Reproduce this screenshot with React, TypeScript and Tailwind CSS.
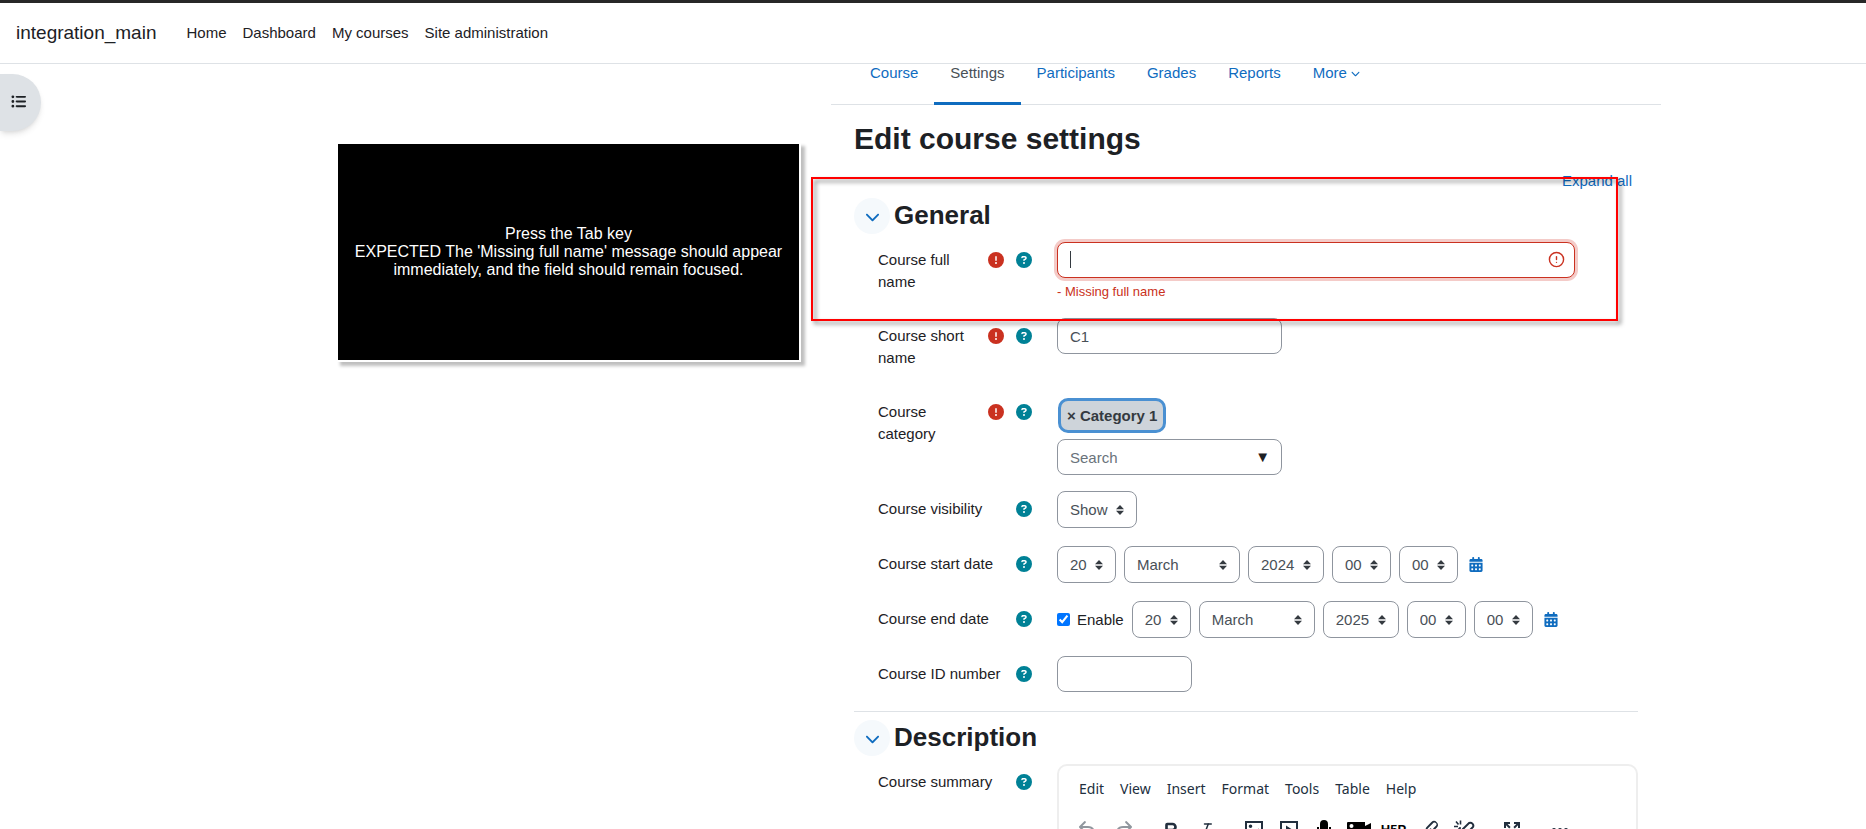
import type { ReactNode } from 'react';
import { Bold, CircleAlert, Italic } from 'lucide-react';
import {
  FaCalendarDays,
  FaChevronDown,
  FaCircleExclamation,
  FaCircleQuestion,
  FaListUl,
} from 'react-icons/fa6';

const navLinks = ['Home', 'Dashboard', 'My courses', 'Site administration'];
const tabs = ['Course', 'Settings', 'Participants', 'Grades', 'Reports'];
const editorMenus = ['Edit', 'View', 'Insert', 'Format', 'Tools', 'Table', 'Help'];

const inputClass =
  'h-9 max-w-full rounded-lg border border-[#8f959e] bg-white px-3 text-[15px] text-[#495057] outline-none placeholder:text-[#6a737b]';

interface FieldRowProps {
  label: string;
  htmlFor?: string;
  required?: boolean;
  children: ReactNode;
}

function FieldRow({ label, htmlFor, required, children }: FieldRowProps) {
  return (
    <div className="mb-4 ml-6 grid min-h-[39px] grid-cols-[154px_minmax(0,1fr)] gap-[25px]">
      <div className="flex items-start justify-between gap-2 pt-[7px] pb-[9px]">
        <label htmlFor={htmlFor}>{label}</label>
        <div className="flex h-[22px] shrink-0 items-center gap-3">
          {required && <FaCircleExclamation className="size-4 text-[#ca3120]" />}
          <button type="button" aria-label={`Help with ${label}`}>
            <FaCircleQuestion className="size-4 text-[#008196]" />
          </button>
        </div>
      </div>
      <div className="min-w-0">{children}</div>
    </div>
  );
}

interface SelectProps {
  id?: string;
  label?: string;
  value: string;
  width: string;
}

function Select({ id, label, value, width }: SelectProps) {
  return (
    <div className={`relative ${width}`}>
      <select
        id={id}
        aria-label={label}
        defaultValue={value}
        className="h-[37px] w-full appearance-none rounded-lg border border-[#8f959e] bg-white pl-3 text-[15px] text-[#495057]"
      >
        <option>{value}</option>
      </select>
      <svg
        viewBox="0 0 8 10"
        className="pointer-events-none absolute top-[14px] right-[13px] h-[10px] w-2 fill-[#343a40]"
      >
        <path d="M4 0 0 4.300h8zM4 10l4-4.300H0z" />
      </svg>
    </div>
  );
}

function DateSelects({ id, name, year }: { id: string; name: string; year: string }) {
  return (
    <>
      <Select id={id} value="20" width="w-[59px]" />
      <Select label={`${name} month`} value="March" width="w-[116px]" />
      <Select label={`${name} year`} value={year} width="w-[76px]" />
      <Select label={`${name} hour`} value="00" width="w-[59px]" />
      <Select label={`${name} minute`} value="00" width="w-[59px]" />
      <button type="button" aria-label={`${name} calendar`} className="ml-[3px] text-[#0f6cbf]">
        <FaCalendarDays className="h-[15px] w-[14px]" />
      </button>
    </>
  );
}

function SectionHeading({ title }: { title: string }) {
  return (
    <div className="mb-2 flex items-start gap-1">
      <button
        type="button"
        aria-label={`Collapse ${title}`}
        className="flex size-9 items-center justify-center rounded-full bg-[#f5f9fc] text-[#0f6cbf]"
      >
        <FaChevronDown className="size-[15px]" />
      </button>
      <h3 className="text-[26px] leading-[34px] font-bold">{title}</h3>
    </div>
  );
}

function ToolButton({ label, children }: { label: string; children: ReactNode }) {
  return (
    <button type="button" aria-label={label} className="flex h-6 w-[35px] items-center justify-center">
      {children}
    </button>
  );
}

function ToolIcon({ d, className = 'fill-[#222f3e]' }: { d: string; className?: string }) {
  return (
    <svg viewBox="0 0 24 24" fillRule="evenodd" className={`size-6 ${className}`}>
      <path d={d} />
    </svg>
  );
}

const undoPath =
  'M6.4 8H12c3.7 0 6.2 2 6.8 5.1.6 2.7-.4 5.6-2.3 6.8a1 1 0 0 1-1-1.8c1.1-.6 1.8-2.7 1.4-4.6-.5-2.1-2.1-3.5-4.9-3.5H6.4l3.3 3.3a1 1 0 1 1-1.4 1.4l-5-5a1 1 0 0 1 0-1.4l5-5a1 1 0 0 1 1.4 1.4L6.4 8z';

function Toolbar() {
  return (
    <div className="flex gap-[13px] pl-[11px] text-[#222f3e]">
      <div className="flex">
        <ToolButton label="Undo">
          <ToolIcon d={undoPath} className="fill-[#222f3e]/50" />
        </ToolButton>
        <ToolButton label="Redo">
          <ToolIcon d={undoPath} className="-scale-x-100 fill-[#222f3e]/50" />
        </ToolButton>
      </div>
      <div className="flex">
        <ToolButton label="Bold">
          <Bold className="size-[18px]" strokeWidth={3.5} />
        </ToolButton>
        <ToolButton label="Italic">
          <Italic className="size-[18px]" strokeWidth={2} />
        </ToolButton>
      </div>
      <div className="flex">
        <ToolButton label="Image">
          <ToolIcon d="M3 3h18v18H3zM5 5v10.7l3.8-3.6L12 15l4.6-4.4 2.4 2.3V5zM8.5 6.5a1.8 1.8 0 1 1 0 3.6 1.8 1.8 0 0 1 0-3.6z" />
        </ToolButton>
        <ToolButton label="Multimedia">
          <ToolIcon d="M3 3h18v18H3zM5 5v14h14V5zM9 7.5 16 12l-7 4.5z" />
        </ToolButton>
        <ToolButton label="Record audio">
          <ToolIcon
            d="M12 2a4 4 0 0 1 4 4v6a4 4 0 0 1-8 0V6a4 4 0 0 1 4-4zM5 9h2v3a5 5 0 0 0 10 0V9h2v3a7 7 0 0 1-6 7v2h3v2H8v-2h3v-2a7 7 0 0 1-6-7z"
            className="fill-black"
          />
        </ToolButton>
        <ToolButton label="Record video">
          <ToolIcon
            d="M1 4h17v4l6-3v14l-6-3v4H1a1 1 0 0 1-1-1V5a1 1 0 0 1 1-1zM4.5 6a2 2 0 1 0 0 4 2 2 0 0 0 0-4z"
            className="fill-black"
          />
        </ToolButton>
        <ToolButton label="Configure H5P content">
          <span className="text-[13px] leading-[22px] font-black text-black">H5P</span>
        </ToolButton>
        <ToolButton label="Link">
          <ToolIcon d="M6.2 12.3a1 1 0 0 1 1.4 1.4l-2 2a2 2 0 1 0 2.6 2.8l4.8-4.8a1 1 0 0 0 0-1.4 1 1 0 1 1 1.4-1.3 2.9 2.9 0 0 1 0 4L9.6 20a3.9 3.9 0 0 1-5.5-5.5l2-2zm11.6-.6a1 1 0 0 1-1.4-1.4l2-2a2 2 0 1 0-2.6-2.8L11 10.3a1 1 0 0 0 0 1.4A1 1 0 1 1 9.6 13a2.9 2.9 0 0 1 0-4L14.4 4a3.9 3.9 0 0 1 5.5 5.5l-2 2z" />
        </ToolButton>
        <ToolButton label="Unlink">
          <svg viewBox="0 0 24 24" className="size-6 fill-none stroke-[#222f3e] stroke-2">
            <path d="m11 11 6-6a3 3 0 0 1 4 4l-6 6M13 13l-6 7a3 3 0 0 1-4-4l5-6" strokeLinecap="round" />
            <path d="M8.500 2.500v4M4 3.500l2.500 3M2 8.500h4" strokeWidth="1.600" />
          </svg>
        </ToolButton>
      </div>
      <ToolButton label="Fullscreen">
        <ToolIcon d="M4 4h6v2H7.600l3 3-1.400 1.400L6 7.300V10H4zM20 4h-6v2h2.400l-3 3 1.400 1.400L18 7.300V10h2zM4 20h6v-2H7.600l3-3-1.400-1.400L6 16.700V14H4zM20 20h-6v-2h2.400l-3-3 1.400-1.400 3.200 3.100V14h2z" />
      </ToolButton>
      <ToolButton label="More">
        <ToolIcon d="M6 10a2 2 0 1 0 0 4 2 2 0 0 0 0-4zM12 10a2 2 0 1 0 0 4 2 2 0 0 0 0-4zM18 10a2 2 0 1 0 0 4 2 2 0 0 0 0-4z" />
      </ToolButton>
    </div>
  );
}

function Navbar() {
  return (
    <nav className="flex h-16 items-center gap-[30px] border-t-[3px] border-b border-t-[#282828] border-b-[#dee2e6] bg-white pl-4">
      <a href="#" className="text-[19px]">
        integration_main
      </a>
      <div className="flex gap-4">
        {navLinks.map((link) => (
          <a key={link} href="#">
            {link}
          </a>
        ))}
      </div>
    </nav>
  );
}

export default function App() {
  return (
    <div className="h-screen overflow-hidden bg-white font-['Liberation_Sans',Arial,sans-serif] text-[15px] leading-[22px] text-[#1d2125]">
      <Navbar />
      <div className="grid grid-cols-[minmax(0,831fr)_minmax(0,830px)_minmax(0,205fr)]">
        <div className="flex items-start justify-between">
          <button
            type="button"
            aria-label="Open course index"
            className="mt-[10px] flex h-[57px] w-[41px] items-center rounded-r-full bg-[#dee2e6] pb-0.5 pl-[11px] shadow-md"
          >
            <FaListUl className="size-[15px]" />
          </button>
          <div className="mt-[78px] mr-[30px] border-2 border-white shadow-[4px_4px_3px_rgba(0,0,0,0.25)]">
            <p className="flex h-[216px] w-[461px] items-center justify-center bg-black px-2 text-center text-base leading-[18px] text-white">
              <span>
                Press the Tab key
                <br />
                EXPECTED The 'Missing full name' message should appear immediately, and the field should remain
                focused.
              </span>
            </p>
          </div>
        </div>

        <main className="relative">
          {/* Course tabs */}
          <div className="flex h-[41px] border-b border-[#dee2e6] px-[23px] leading-[18px] text-[#0f6cbf]">
            {tabs.map((tab) => (
              <a
                key={tab}
                href="#"
                className={`h-[41px] px-4 ${tab === 'Settings' ? 'border-b-[3px] border-[#0f6cbf] text-[#495057]' : ''}`}
              >
                {tab}
              </a>
            ))}
            <a href="#" className="flex h-[18px] items-center gap-1 px-4">
              More
              <FaChevronDown className="size-[9px]" />
            </a>
          </div>

          <form className="px-[23px]">
            <h2 className="mt-4 text-[30px] leading-9 font-bold">Edit course settings</h2>
            <div className="mt-[13px] mb-[6px] flex justify-end pr-[6px]">
              <a href="#" className="text-[#0f6cbf]">
                Expand all
              </a>
            </div>

            <section className="border-b border-[#dee2e6]">
              <SectionHeading title="General" />
              <FieldRow label="Course full name" htmlFor="fullname" required>
                <div className="relative w-[518px] max-w-full">
                  <input
                    id="fullname"
                    type="text"
                    className="h-9 w-full rounded-lg border border-[#ca3120] bg-white px-3 text-[15px] caret-transparent shadow-[0_0_0_3px_#f4cbc8] outline-none"
                  />
                  <span className="absolute top-[9px] left-[13px] h-[17px] w-px bg-[#343a40]" />
                  <CircleAlert className="absolute top-[9px] right-[10px] size-[17px] text-[#ca3120]" />
                </div>
                <p className="mt-1 text-[13px] leading-5 text-[#ca3120]">- Missing full name</p>
              </FieldRow>
              <FieldRow label="Course short name" htmlFor="shortname" required>
                <input id="shortname" type="text" defaultValue="C1" className={`${inputClass} w-[225px]`} />
              </FieldRow>
              <FieldRow label="Course category" htmlFor="category" required>
                <div className="pt-1">
                  <button
                    type="button"
                    className="mb-[6px] ml-px block h-[35px] rounded-[10px] border-[3px] border-[#4a90d2] bg-[#ced4da] px-[6px] font-bold text-[#343a40]"
                  >
                    × Category 1
                  </button>
                  <div className="relative w-[225px] max-w-full">
                    <input id="category" type="text" placeholder="Search" className={`${inputClass} w-full`} />
                    <span className="pointer-events-none absolute top-[7px] right-3">▼</span>
                  </div>
                </div>
              </FieldRow>
              <FieldRow label="Course visibility" htmlFor="visibility">
                <Select id="visibility" value="Show" width="w-20" />
              </FieldRow>
              <FieldRow label="Course start date" htmlFor="startdate">
                <div className="flex items-center gap-2">
                  <DateSelects id="startdate" name="Start" year="2024" />
                </div>
              </FieldRow>
              <FieldRow label="Course end date" htmlFor="enddate">
                <div className="flex items-center gap-2">
                  <label className="flex items-center gap-[7px]">
                    <input type="checkbox" defaultChecked className="size-[13px]" />
                    Enable
                  </label>
                  <DateSelects id="enddate" name="End" year="2025" />
                </div>
              </FieldRow>
              <FieldRow label="Course ID number" htmlFor="idnumber">
                <input id="idnumber" type="text" className={`${inputClass} w-[135px]`} />
              </FieldRow>
            </section>

            <section className="pt-2">
              <SectionHeading title="Description" />
              <FieldRow label="Course summary">
                <div className="h-[400px] rounded-[10px] border-2 border-[#eeeeee] pt-3">
                  <div className="mb-[18px] flex gap-4 pl-5 font-['Noto_Sans',sans-serif] text-sm leading-[22px] text-[#222f3e]">
                    {editorMenus.map((menu) => (
                      <button key={menu} type="button">
                        {menu}
                      </button>
                    ))}
                  </div>
                  <Toolbar />
                </div>
              </FieldRow>
            </section>
          </form>

          {/* Highlight frame around the full name field */}
          <div className="pointer-events-none absolute top-[113px] right-[43px] -left-5 h-36 border-2 border-[#ff0000] drop-shadow-[3px_3px_2px_rgba(0,0,0,0.5)]" />
        </main>
      </div>
    </div>
  );
}
